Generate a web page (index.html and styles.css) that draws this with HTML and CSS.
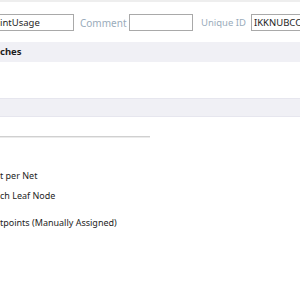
FILE: index.html
```html
<!DOCTYPE html>
<html lang="en">
<head>
    <meta charset="UTF-8">
    <meta name="viewport" content="width=device-width, initial-scale=1.0">
    <title>Testpoint Settings</title>
    <link rel="stylesheet" href="styles.css">
</head>
<body>
    <div class="top-strip"></div>

    <div class="field-row">
        <input type="text" class="field field-name" value="intUsage">
        <label class="field-label label-comment">Comment</label>
        <input type="text" class="field field-comment" value="">
        <label class="field-label label-id">Unique ID</label>
        <input type="text" class="field field-id" value="IKKNUBCC">
    </div>

    <div class="section-head">ches</div>

    <div class="spacer"></div>

    <div class="section-head section-empty"></div>

    <div class="divider"></div>

    <div class="options">
        <div class="option">t per Net</div>
        <div class="option">ch Leaf Node</div>
        <div class="option gap">tpoints (Manually Assigned)</div>
    </div>
</body>
</html>
```

FILE: styles.css
```css
body {
    font-family: "Noto Sans", "Open Sans", sans-serif;
    font-size: 9px;
    color: #1e1e1e;
    background-color: #fff;
    margin: 0;
    overflow: hidden;
}
.top-strip {
    height: 2px;
    background-color: #eeeeee;
}
.field-row {
    display: flex;
    align-items: center;
    margin-top: 12px;
    height: 17px;
    white-space: nowrap;
}
.field {
    flex-shrink: 0;
    box-sizing: border-box;
    height: 17px;
    border: 1px solid #a9a9a9;
    padding: 0 3px;
    font-family: inherit;
    font-size: 9.5px;
    color: #1e1e1e;
    background-color: #fff;
}
.field-name {
    width: 74px;
    padding-left: 0;
    border-left: none;
}
.field-comment {
    width: 64px;
}
.field-id {
    width: 60px;
    padding-left: 2px;
}
.field-label {
    flex-shrink: 0;
    color: #9aacbb;
    box-sizing: border-box;
    font-size: 9.5px;
}
.label-comment {
    width: 55px;
    padding-left: 6px;
    font-size: 10px;
}
.label-id {
    width: 58px;
    padding-left: 8px;
}
.section-head {
    margin-top: 11px;
    height: 20px;
    line-height: 20px;
    background-color: #f0f0f5;
    font-weight: bold;
    font-size: 9.5px;
}
.spacer {
    height: 36px;
}
.section-empty {
    margin-top: 0;
    height: 17px;
    border-top: 1px solid #e6e6ee;
    border-bottom: 1px solid #e6e6ee;
}
.divider {
    margin-top: 19px;
    width: 150px;
    height: 1px;
    background-color: #d0d0d0;
    border-bottom: 1px solid #ebebeb;
}
.options {
    padding-top: 28px;
}
.option {
    height: 20px;
    line-height: 20px;
    font-size: 9px;
}
.option.gap {
    margin-top: 7px;
}
```
